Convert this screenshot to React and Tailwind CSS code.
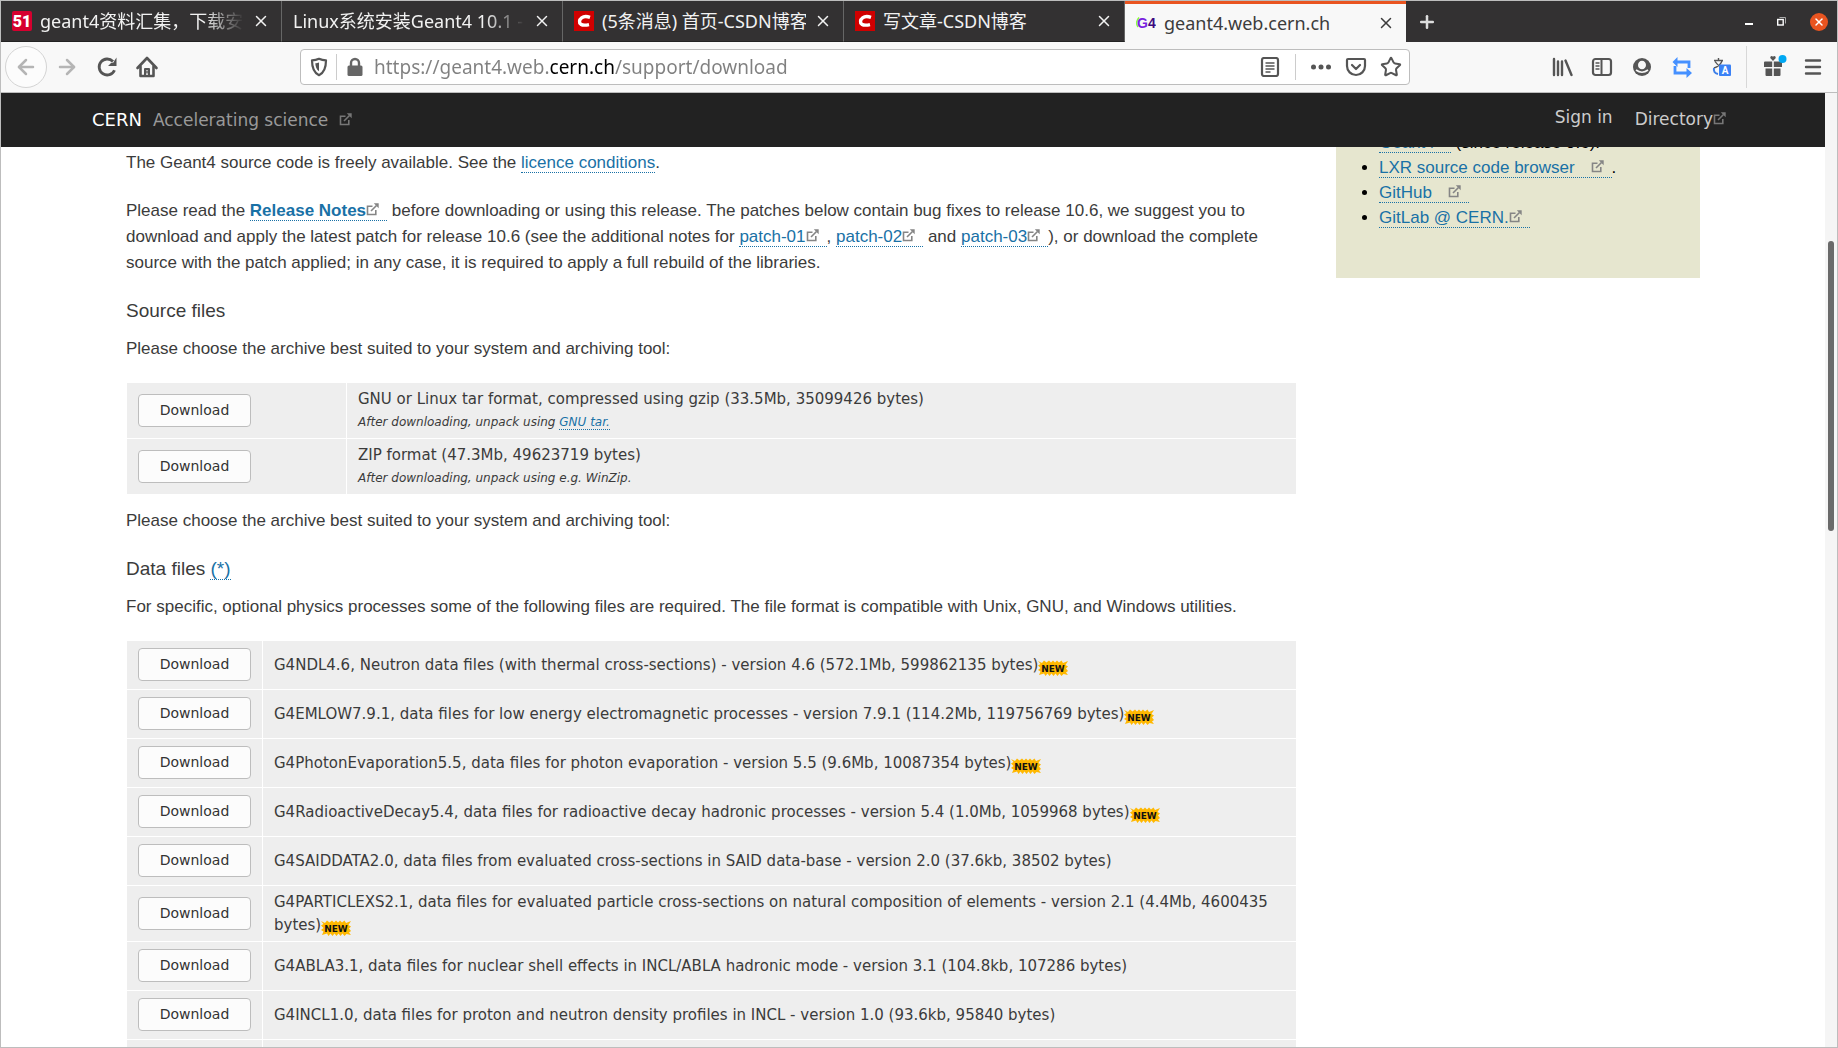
import React from 'react';
import { X, Plus, ArrowLeft, ArrowRight, Star } from 'lucide-react';

const tabs = [
  { id: 't51', title: 'geant4资料汇集，下载安装', icon: '51', fade: true },
  { id: 'linux', title: 'Linux系统安装Geant4 10.1 - ', fade: true },
  { id: 'home', title: '(5条消息) 首页-CSDN博客', icon: 'C' },
  { id: 'write', title: '写文章-CSDN博客', icon: 'C' },
  { id: 'geant4', title: 'geant4.web.cern.ch', icon: 'G4', active: true },
];

const sourceFiles = [
  {
    name: 'GNU or Linux tar format, compressed using gzip (33.5Mb, 35099426 bytes)',
    note: 'After downloading, unpack using ',
    link: 'GNU tar.',
  },
  {
    name: 'ZIP format (47.3Mb, 49623719 bytes)',
    note: 'After downloading, unpack using e.g. WinZip.',
  },
];

const dataFiles = [
  { name: 'G4NDL4.6, Neutron data files (with thermal cross-sections) - version 4.6 (572.1Mb, 599862135 bytes)', isNew: true },
  { name: 'G4EMLOW7.9.1, data files for low energy electromagnetic processes - version 7.9.1 (114.2Mb, 119756769 bytes)', isNew: true },
  { name: 'G4PhotonEvaporation5.5, data files for photon evaporation - version 5.5 (9.6Mb, 10087354 bytes)', isNew: true },
  { name: 'G4RadioactiveDecay5.4, data files for radioactive decay hadronic processes - version 5.4 (1.0Mb, 1059968 bytes)', isNew: true },
  { name: 'G4SAIDDATA2.0, data files from evaluated cross-sections in SAID data-base - version 2.0 (37.6kb, 38502 bytes)' },
  { name: 'G4PARTICLEXS2.1, data files for evaluated particle cross-sections on natural composition of elements - version 2.1 (4.4Mb, 4600435 bytes)', isNew: true },
  { name: 'G4ABLA3.1, data files for nuclear shell effects in INCL/ABLA hadronic mode - version 3.1 (104.8kb, 107286 bytes)' },
  { name: 'G4INCL1.0, data files for proton and neutron density profiles in INCL - version 1.0 (93.6kb, 95840 bytes)' },
];

function Favicon({ kind }) {
  if (kind === '51') {
    return (
      <svg viewBox="0 0 20 20" className="w-5 h-5 shrink-0">
        <rect width="20" height="20" rx="2" fill="#d6002f" />
        <text x="10" y="16" textAnchor="middle" fontSize="16" fontWeight="900" fontFamily="Roboto, sans-serif" fill="#fff">51</text>
      </svg>
    );
  }
  if (kind === 'C') {
    return (
      <svg viewBox="0 0 20 20" className="w-5 h-5 shrink-0">
        <rect width="20" height="20" fill="#d00000" />
        <path d="M16 6.300C13 5.300 9.800 5.200 7.600 6.800 5.200 8.600 4.800 11.800 6.800 13.200c1.900 1.200 5 1.100 8.200.4" fill="none" stroke="#fff" strokeWidth="3.400" />
      </svg>
    );
  }
  return (
    <svg viewBox="0 0 20 20" className="w-5 h-5 shrink-0">
      <path d="M3 4.500C0 8 0 11 2 14" fill="none" stroke="#8f3" strokeWidth="1.500" />
      <text x="1" y="15" fontSize="14" fontWeight="700" fontFamily="Liberation Sans, sans-serif">
        <tspan fill="#7a1fe0">G</tspan>
        <tspan fill="#3c0a80">4</tspan>
      </text>
    </svg>
  );
}

function ExternalIcon({ className = 'text-[#858585]' }) {
  return (
    <svg viewBox="0 0 13 13" className={`inline-block w-[13px] h-[13px] align-baseline ${className}`} fill="none" stroke="currentColor">
      <path d="M6.500 3.200H1.500v8.300h8.300V7" strokeWidth="1.600" />
      <path d="M5 8 10.500 2.500" strokeWidth="1.600" />
      <path d="M7.800.3h4.900v4.900z" fill="currentColor" stroke="none" />
    </svg>
  );
}

function NewBadge() {
  return (
    <svg viewBox="0 0 30 16" className="inline-block w-[30px] h-4 align-[-6px]" role="img" aria-label="New">
      <path
        d="M0 1 4 3 6 .5 8.500 2.500 11 .5l2 2L15 .5l2 2 2-2 2 2 2.500-2L25 3l5-2-2.500 4L30 6.500 28 8.500 30 11l-2 1.500L30 15l-4.500-1-2 2-2-2.500-2 2.500-2-2.500L15.500 16l-2-2.500-2 2.500-2-2.500L7.500 16 6 13.500 1 15l1.500-3.500L0 10l2.500-2L0 5.500 2.500 4z"
        fill="#ffb800"
      />
      <text x="15" y="12" textAnchor="middle" fontSize="9" fontWeight="700" fontFamily="DejaVu Sans, sans-serif" fill="#111">NEW</text>
    </svg>
  );
}

function Link({ children, className = '' }) {
  return (
    <a href="#" className={`text-[#1971a6] border-b border-dotted border-[#1971a6] ${className}`}>
      {children}
    </a>
  );
}

function DownloadButton() {
  return (
    <button className="block w-[113px] h-[33px] rounded-sm border border-[#bdbdbd] bg-[#fcfcfc] text-[14px] text-[#333]">
      Download
    </button>
  );
}

function TabBar() {
  return (
    <div className="flex h-[41px] shrink-0 bg-[#333132]">
      {tabs.map((tab) => (
        <div
          key={tab.id}
          className={`flex w-[281px] min-w-0 items-center gap-2 pl-[11px] pr-[11px] text-[18px] ${
            tab.active
              ? 'bg-[#f8f8f8] border-t-3 border-[#e95420] text-[#3c3c3c]'
              : 'border-r border-b border-r-[#666] border-b-[#222] text-[#f2f2f2]'
          }`}
        >
          {tab.icon && <Favicon kind={tab.icon} />}
          <span
            className={`flex-1 overflow-hidden whitespace-nowrap leading-[26px] ${
              tab.fade ? '[mask-image:linear-gradient(to_left,transparent,black_40px)]' : ''
            }`}
          >
            {tab.title}
          </span>
          <button aria-label="Close tab" className="shrink-0">
            <X className="w-[18px] h-[18px]" strokeWidth={2} />
          </button>
        </div>
      ))}
      <button aria-label="New tab" className="px-[11px] text-[#ddd]">
        <Plus className="w-5 h-5" strokeWidth={3} />
      </button>
      <div className="ml-auto flex items-center gap-6 pr-[9px]">
        <button aria-label="Minimize" className="w-2 h-0.5 mt-1 bg-white"></button>
        <button aria-label="Restore">
          <svg viewBox="0 0 9 9" className="w-[9px] h-[9px]" fill="none">
            <path d="M2.500.5h6v6" stroke="#aaa" />
            <rect x=".7" y="2.500" width="5.500" height="5.500" stroke="#fff" strokeWidth="1.400" />
          </svg>
        </button>
        <button aria-label="Close window" className="flex w-[18px] h-[18px] items-center justify-center rounded-full bg-[#e95420] text-white">
          <X className="w-3 h-3" strokeWidth={3} />
        </button>
      </div>
    </div>
  );
}

function Toolbar() {
  return (
    <div className="flex h-[51px] shrink-0 items-center border-b border-[#bdbdbd] bg-[#f8f8f8] pl-1 text-[#555]">
      <button aria-label="Back" className="flex w-[42px] h-[42px] items-center justify-center rounded-full border border-[#d4d4d4] bg-[#fcfcfc] text-[#b5b5b5]">
        <ArrowLeft className="w-6 h-6" strokeWidth={2.5} />
      </button>
      <div className="flex items-center gap-4 pl-2">
        <button aria-label="Forward" className="text-[#b5b5b5]">
          <ArrowRight className="w-6 h-6" strokeWidth={2.5} />
        </button>
        <button aria-label="Reload">
          <svg viewBox="0 0 24 24" className="w-6 h-6" fill="none" stroke="currentColor" strokeWidth="2.800">
            <path d="M19.500 15.200A8 8 0 1 1 18 6.500" />
            <path d="M21.500 2.500v8.500H13l3-3 2.500-.5 1-2z" fill="currentColor" stroke="none" />
          </svg>
        </button>
        <button aria-label="Home">
          <svg viewBox="0 0 24 24" className="w-6 h-6" fill="none" stroke="currentColor" strokeWidth="2.600" strokeLinejoin="round" strokeLinecap="round">
            <path d="M2.500 13 12 3l9.500 10" />
            <path d="M5.500 11.500V21h13v-9.500" />
            <path d="M10 21v-7h4v7" strokeWidth="2" />
            <path d="M12 16v2" strokeWidth="1.500" />
          </svg>
        </button>
      </div>

      {/* Address bar */}
      <div className="ml-[141px] mr-[141px] flex h-9 flex-1 items-center rounded-sm border border-[#bdbdbd] bg-white pl-2 pr-[7px]">
        <button aria-label="Tracking protection">
          <svg viewBox="0 0 20 20" className="w-5 h-5" fill="none" stroke="#555" strokeWidth="2.200" strokeLinejoin="round">
            <path d="M10 1.800C7.500 3 5 3.300 3 3.300 3 10 4 15.500 10 18.200 16 15.500 17 10 17 3.300c-2 0-4.500-.3-7-1.500z" />
            <path d="M10 5.500v8.700C7.300 12.500 6.500 9.500 6.300 6.300 7.500 6.200 9 6 10 5.500z" fill="#555" stroke="none" />
          </svg>
        </button>
        <span className="mx-[7px] h-[26px] w-px bg-[#ccc]"></span>
        <button aria-label="Site security" className="px-px">
          <svg viewBox="0 0 20 20" className="w-5 h-5">
            <rect x="2.500" y="8.500" width="15" height="10.500" rx="1.500" fill="#666" />
            <path d="M6 9V6a4 4 0 0 1 8 0v3" fill="none" stroke="#666" strokeWidth="2.400" />
          </svg>
        </button>
        <input
          type="text"
          aria-label="Address"
          defaultValue="https://geant4.web.cern.ch/support/download"
          className="ml-2 min-w-0 flex-1 bg-[linear-gradient(to_right,#808080_175px,#000_175px,#000_241px,#808080_241px)] bg-clip-text text-[19px] text-transparent outline-none"
        />
        <button aria-label="Reader view">
          <svg viewBox="0 0 20 20" className="w-5 h-5" fill="none" stroke="#555">
            <rect x="2" y="1" width="16" height="18" rx="2" strokeWidth="2.200" />
            <path d="M5.500 6h9M5.500 9h9M5.500 12h9M5.500 15h5" strokeWidth="1.400" />
          </svg>
        </button>
        <span className="ml-[15px] mr-3.5 h-[26px] w-px bg-[#ccc]"></span>
        <div className="flex items-center gap-[13px]">
          <button aria-label="Page actions">
            <svg viewBox="0 0 22 20" className="w-[22px] h-5" fill="#555">
              <circle cx="3.500" cy="10" r="2.500" />
              <circle cx="11" cy="10" r="2.500" />
              <circle cx="18.500" cy="10" r="2.500" />
            </svg>
          </button>
          <button aria-label="Save to Pocket">
            <svg viewBox="0 0 22 20" className="w-[22px] h-5" fill="none" stroke="#555" strokeWidth="2.200" strokeLinecap="round" strokeLinejoin="round">
              <path d="M3 2h16q1 0 1 1v6a9 9 0 0 1-18 0V3q0-1 1-1z" />
              <path d="m7 8 4 4 4-4" />
            </svg>
          </button>
          <button aria-label="Bookmark">
            <Star className="w-[22px] h-[22px]" strokeWidth={2.2} />
          </button>
        </div>
      </div>

      <div className="flex items-center gap-[18px]">
        <button aria-label="Library">
          <svg viewBox="0 0 22 22" className="w-[22px] h-[22px]" fill="none" stroke="currentColor" strokeWidth="2.400" strokeLinecap="round">
            <path d="M3 3v16M7 5.500V19M11 5.500V19M14.500 4.500l6 14.500" />
          </svg>
        </button>
        <button aria-label="Sidebars">
          <svg viewBox="0 0 22 22" className="w-[22px] h-[22px]" fill="none" stroke="currentColor">
            <rect x="2" y="3" width="18" height="16" rx="2.500" strokeWidth="2.200" />
            <path d="M10.500 3v16" strokeWidth="2" />
            <path d="M4.500 7h4M4.500 10h4M4.500 13h4" strokeWidth="1.600" />
          </svg>
        </button>
        <button aria-label="Account">
          <svg viewBox="0 0 22 22" className="w-[22px] h-[22px]">
            <circle cx="11" cy="11" r="9" fill="#555" />
            <ellipse cx="11" cy="9" rx="4" ry="4.300" fill="#f8f8f8" />
            <path d="M5 14q6 4.500 12 0" fill="none" stroke="#f8f8f8" strokeWidth="1.600" />
          </svg>
        </button>
        <button aria-label="Sync pages">
          <svg viewBox="0 0 22 22" className="w-[22px] h-[22px]" fill="none" stroke="#4590ff" strokeWidth="2.800">
            <path d="M6 6h12v6M4 10v7h12" />
            <path d="M6.500 1v10L1.500 6zM15.500 12v10l5.500-5z" fill="#4590ff" stroke="none" />
          </svg>
        </button>
        <button aria-label="Translate">
          <svg viewBox="0 0 22 22" className="w-[22px] h-[22px]" fill="none">
            <path d="M3 4.500h9M7.500 2v2.500M4 5.500q2.500 4 7 6M11 5q-2 5-8 7" stroke="#555" strokeWidth="1.400" />
            <path d="M3 12q-1 5 4 6" stroke="#3d7fe8" strokeWidth="2" />
            <rect x="8" y="8.500" width="12" height="11.500" rx="1" fill="#3b82f6" />
            <text x="14" y="18" textAnchor="middle" fontSize="10" fontWeight="700" fontFamily="Roboto, sans-serif" fill="#fff">A</text>
          </svg>
        </button>
      </div>
      <span className="ml-[13px] mr-[15px] h-[42px] w-px bg-[#d8d8d8]"></span>
      <div className="flex items-center gap-[18px] pr-[13px]">
        <button aria-label="What's new">
          <svg viewBox="0 0 22 28" className="w-[22px] h-7 overflow-visible" fill="#555">
            <path d="M2 9.500q0-1 1-1h7.200v5.500H2zM11.800 8.500H19q1 0 1 1V14h-8.200zM3.500 15.500h6.700V23H4.500q-1 0-1-1zM11.800 15.500h6.700V22q0 1-1 1h-5.700z" />
            <path d="M11 8 8.200 5q0-2 1.500-2 1 0 1.300 1 .3-1 1.300-1 1.500 0 1.500 2z" />
            <circle cx="20.500" cy="6" r="4" fill="#00a8f3" />
          </svg>
        </button>
        <button aria-label="Menu">
          <svg viewBox="0 0 22 22" className="w-[22px] h-[22px]" stroke="currentColor" strokeWidth="2.400" strokeLinecap="round">
            <path d="M4 4.500h14M4 11h14M4 17.500h14" />
          </svg>
        </button>
      </div>
    </div>
  );
}

function SiteHeader() {
  return (
    <header className="flex h-[54px] items-center justify-between bg-[#222] pl-[91px] pr-[99px] text-[17px] text-[#999]">
      <a href="#" className="flex items-baseline gap-[11px]">
        <span className="text-[18px] text-white">CERN</span>
        <span>Accelerating science</span>
        <ExternalIcon className="text-[#777]" />
      </a>
      <nav className="flex items-start gap-[22px] text-[#ccc]">
        <a href="#" className="pb-1">Sign in</a>
        <a href="#" className="pt-0.5">
          Directory
          <ExternalIcon className="text-[#777]" />
        </a>
      </nav>
    </header>
  );
}

function DownloadTable({ children, label }) {
  return (
    <table aria-label={label} className="w-full border-separate border-spacing-px font-['DejaVu_Sans',sans-serif] text-[15px] leading-[23px]">
      <tbody>{children}</tbody>
    </table>
  );
}

function Content() {
  return (
    <main className="min-w-0 flex-1 pt-[3px] text-[17px] leading-[26px] text-[#3b3b3b]">
      <p className="mb-[22px]">
        The Geant4 source code is freely available. See the <Link>licence conditions</Link>.
      </p>
      <p className="mb-[22px]">
        Please read the{' '}
        <Link className="pr-2">
          <strong>Release Notes</strong>
          <ExternalIcon />
        </Link>{' '}
        before downloading or using this release. The patches below contain bug fixes to release 10.6, we suggest you to
        download and apply the latest patch for release 10.6 (see the additional notes for{' '}
        <Link className="pr-2">patch-01<ExternalIcon /></Link>,{' '}
        <Link className="pr-2">patch-02<ExternalIcon /></Link> and{' '}
        <Link className="pr-2">patch-03<ExternalIcon /></Link>), or download the complete source with the patch
        applied; in any case, it is required to apply a full rebuild of the libraries.
      </p>

      <h3 className="mb-3 text-[19px]">Source files</h3>
      <p className="mb-5">Please choose the archive best suited to your system and archiving tool:</p>
      <DownloadTable label="Source files">
        {sourceFiles.map((file) => (
          <tr key={file.name} className="bg-[#eee]">
            <td className="w-[219px] pl-[11px]">
              <DownloadButton />
            </td>
            <td className="h-[55px] px-[11px] py-1">
              {file.name}
              <div className="text-[12px] italic">
                {file.note}
                {file.link && <Link>{file.link}</Link>}
              </div>
            </td>
          </tr>
        ))}
      </DownloadTable>
      <p className="mt-[13px] mb-[22px]">Please choose the archive best suited to your system and archiving tool:</p>

      <h3 className="mb-3 text-[19px]">
        Data files <Link>(*)</Link>
      </h3>
      <p className="mb-5">
        For specific, optional physics processes some of the following files are required. The file format is compatible
        with Unix, GNU, and Windows utilities.
      </p>
      <DownloadTable label="Data files">
        {dataFiles.map((file) => (
          <tr key={file.name} className="bg-[#eee]">
            <td className="w-[135px] pb-px pl-[11px]">
              <DownloadButton />
            </td>
            <td className="h-12 px-[11px] pt-[5px] pb-1">
              {file.name}
              {file.isNew && <NewBadge />}
            </td>
          </tr>
        ))}
        <tr className="bg-[#eee]">
          <td className="h-12"></td>
          <td></td>
        </tr>
      </DownloadTable>
    </main>
  );
}

function Sidebar() {
  return (
    <aside className="w-[364px] shrink-0 overflow-hidden bg-[#e6e6cf] pb-12 pl-[43px] text-[17px] text-black">
      <ul className="-mt-[17px] list-disc leading-[25px]">
        <li className="list-none">
          <Link className="pr-4">Geant4</Link> (since release 9.6).
        </li>
        <li>
          <Link className="pr-2">
            LXR source code browser
            <ExternalIcon className="ml-4 text-[#858585]" />
          </Link>
          .
        </li>
        <li>
          <Link className="pr-2">
            GitHub
            <ExternalIcon className="ml-4 text-[#858585]" />
          </Link>
        </li>
        <li>
          <Link className="pr-2">
            GitLab @ CERN.
            <ExternalIcon />
          </Link>
        </li>
      </ul>
    </aside>
  );
}

export default function App() {
  return (
    <div className="flex h-screen flex-col overflow-hidden border border-[#bdbdbd] bg-white font-['Noto_Sans','Noto_Sans_CJK_SC',sans-serif]">
      <TabBar />
      <Toolbar />
      <div className="flex min-h-0 flex-1">
        <div className="min-w-0 flex-1 overflow-hidden font-['DejaVu_Sans',sans-serif]">
          <SiteHeader />
          <div className="flex items-start gap-[39px] px-[125px] font-['Liberation_Sans',sans-serif]">
            <Content />
            <Sidebar />
          </div>
        </div>
        {/* Scrollbar */}
        <div className="w-3 shrink-0 bg-[#f5f5f5] pt-[148px] pl-[3px]">
          <div className="h-[290px] w-1.5 rounded-full bg-[#6a6a6a]"></div>
        </div>
      </div>
    </div>
  );
}
